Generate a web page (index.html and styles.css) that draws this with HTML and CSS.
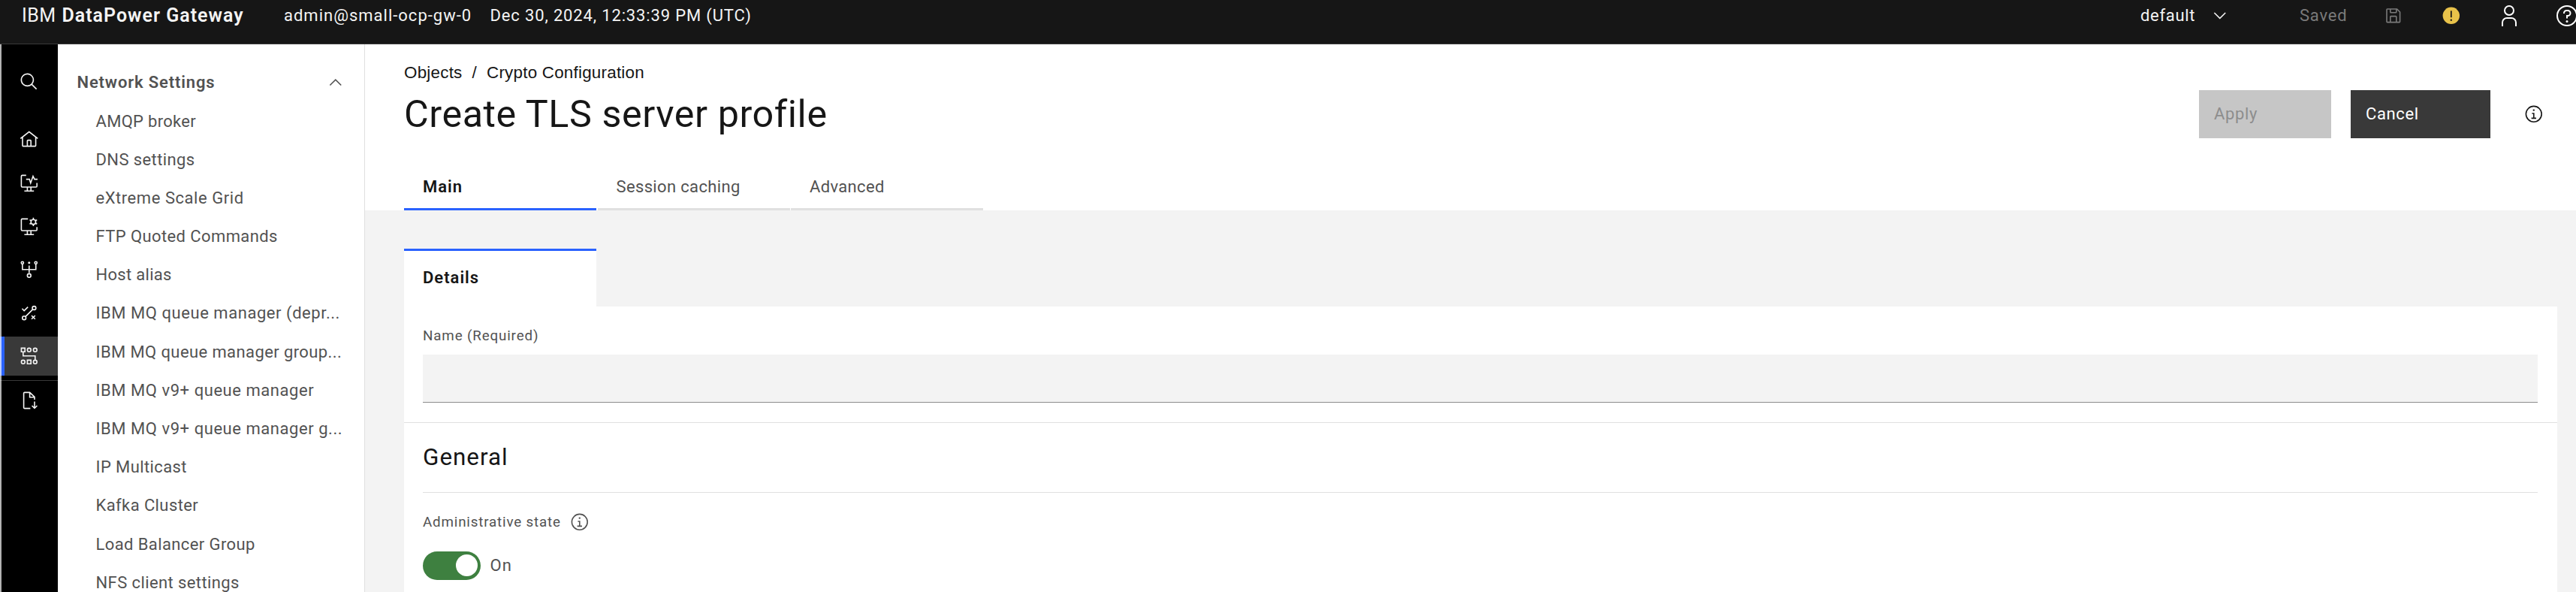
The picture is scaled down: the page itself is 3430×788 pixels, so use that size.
FILE: index.html
```html
<!DOCTYPE html>
<html lang="en">
<head>
<meta charset="utf-8">
<title>IBM DataPower Gateway</title>
<link rel="stylesheet" href="styles.css">
</head>
<body>
<header class="header">
  <div class="brand"><span class="brand-light">IBM</span><span class="brand-name">DataPower Gateway</span></div>
  <span class="host">admin@small-ocp-gw-0</span>
  <span class="clock">Dec 30, 2024, 12:33:39 PM (UTC)</span>
  <div class="header-tools">
    <span class="domain">default</span>
    <svg class="icon domain-chevron" viewBox="0 0 16 16"><path d="M8 11L3 6l.7-.7L8 9.6l4.3-4.3.7.7z"/></svg>
    <span class="saved">Saved</span>
    <svg class="icon save-icon" viewBox="0 0 32 32"><path d="M27.71,9.29l-5-5A1,1,0,0,0,22,4H6A2,2,0,0,0,4,6V26a2,2,0,0,0,2,2H26a2,2,0,0,0,2-2V10A1,1,0,0,0,27.71,9.29ZM12,6h8v4H12Zm8,20H12V18h8Zm2,0V18a2,2,0,0,0-2-2H12a2,2,0,0,0-2,2v8H6V6h4v4a2,2,0,0,0,2,2h8a2,2,0,0,0,2-2V6.41l4,4V26Z"/></svg>
    <svg class="icon warn-icon" viewBox="0 0 32 32"><circle cx="16" cy="16" r="14"/><path class="warn-mark" d="M14.9 8h2.2v11h-2.2z"/><circle class="warn-mark" cx="16" cy="23.3" r="1.5"/></svg>
    <svg class="icon-large user-icon" viewBox="0 0 32 32"><path d="M16 4a5 5 0 1 1-5 5 5 5 0 0 1 5-5m0-2a7 7 0 1 0 7 7 7 7 0 0 0-7-7zM26 30h-2v-5a5 5 0 0 0-5-5h-6a5 5 0 0 0-5 5v5H6v-5a7 7 0 0 1 7-7h6a7 7 0 0 1 7 7z"/></svg>
    <svg class="icon-large help-icon" viewBox="0 0 32 32"><circle class="line" cx="16" cy="16" r="13"/><circle cx="16" cy="23.5" r="1.5"/><path d="M17 8h-1.500a4.490 4.490 0 0 0-4.500 4.500v.5h2v-.5a2.500 2.500 0 0 1 2.500-2.500H17a2.500 2.500 0 0 1 0 5h-2v4.500h2V17a4.500 4.500 0 0 0 0-9z"/></svg>
  </div>
</header>
<div class="shell">
  <nav class="rail">
    <div class="rail-item rail-search"><svg class="icon" viewBox="0 0 32 32"><path d="M29,27.5859l-7.5521-7.5521a11.0177,11.0177,0,1,0-1.4141,1.4141L27.5859,29ZM4,13a9,9,0,1,1,9,9A9.01,9.01,0,0,1,4,13Z"/></svg></div>
    <div class="rail-item"><svg class="icon" viewBox="0 0 32 32"><path d="M16.6123,2.2138a1.01,1.01,0,0,0-1.2427,0L1,13.4194l1.2427,1.5717L4,13.6209V26a2.0041,2.0041,0,0,0,2,2H26a2.0037,2.0037,0,0,0,2-2V13.63L29.7573,15,31,13.4282ZM18,26H14V18h4Zm2,0V18a2.0023,2.0023,0,0,0-2-2H14a2.002,2.002,0,0,0-2,2v8H6V12.0615l10-7.79,10,7.8005V26Z"/></svg></div>
    <div class="rail-item"><svg class="icon line" viewBox="0 0 32 32"><path d="M11 3H4.500Q3 3 3 4.500v16.500q0 1.500 1.500 1.500h23q1.500 0 1.500-1.500V15.500M13 23v6M19 23v6M8 29h16M11 9.500h5.500L18.500 16 22.500 4.500 25 9.500h5"/></svg></div>
    <div class="rail-item"><svg class="icon line" viewBox="0 0 32 32"><path d="M14 3H4.500Q3 3 3 4.500v16.500q0 1.500 1.500 1.500h23q1.500 0 1.500-1.500V16.500M13 23v6M19 23v6M8 29h16"/><circle cx="23" cy="8" r="4"/><path d="M23 1v3M23 12v3M16.900 4.500l2.600 1.500M26.500 10l2.600 1.500M16.900 11.500l2.600-1.500M26.500 6l2.600-1.500"/></svg></div>
    <div class="rail-item"><svg class="icon line" viewBox="0 0 32 32"><circle cx="4.800" cy="4.800" r="2"/><circle cx="27.200" cy="4.800" r="2"/><circle class="dot" cx="16" cy="4.800" r="1.900"/><path d="M4.800 7v9h22.400V7M16 9.500V22"/><circle cx="16" cy="26" r="3"/></svg></div>
    <div class="rail-item"><svg class="icon line" viewBox="0 0 32 32"><circle cx="24.300" cy="7.500" r="3"/><circle cx="7.700" cy="24" r="3"/><path d="M22 9.800L10 21.700M4.300 8.500l3.400 3.400L14 5.800M20 20l6 6M26 20l-6 6"/></svg></div>
    <div class="rail-item rail-selected"><svg class="icon line" viewBox="0 0 32 32"><path d="M3 3h6v6H3zM13 23h6v6h-6zM6 9v7h20v7"/><circle cx="16" cy="6" r="3"/><circle cx="26" cy="6" r="3"/><circle cx="6" cy="26" r="3"/><circle cx="26" cy="26" r="3"/></svg></div>
    <div class="rail-divider"></div>
    <div class="rail-item"><svg class="icon line" viewBox="0 0 32 32"><path d="M18 29.500H8.500q-1.500 0-1.500-1.500V4.500Q7 3 8.500 3H17l8 7.500V15M17 3v8h8M25 18v11M20.700 25l4.300 4.300 4.300-4.300"/></svg></div>
  </nav>
  <aside class="sidebar">
    <div class="side-heading"><span>Network Settings</span><svg class="icon" viewBox="0 0 16 16"><path d="M8 5l5 5-.7.7L8 6.400l-4.300 4.300L3 10z"/></svg></div>
    <ul class="side-list">
      <li class="snug">AMQP broker</li>
      <li>DNS settings</li>
      <li class="loose">eXtreme Scale Grid</li>
      <li>FTP Quoted Commands</li>
      <li class="snug">Host alias</li>
      <li class="loose">IBM MQ queue manager (depr...</li>
      <li>IBM MQ queue manager group...</li>
      <li class="loose">IBM MQ v9+ queue manager</li>
      <li class="loose">IBM MQ v9+ queue manager g...</li>
      <li>IP Multicast</li>
      <li>Kafka Cluster</li>
      <li>Load Balancer Group</li>
      <li>NFS client settings</li>
    </ul>
  </aside>
  <main class="main">
    <section class="page-head">
      <div class="crumbs"><span>Objects</span><span>/</span><span>Crypto Configuration</span></div>
      <div class="title-row">
        <h1>Create TLS server profile</h1>
        <div class="actions">
          <button class="btn btn-disabled">Apply</button>
          <button class="btn btn-cancel">Cancel</button>
          <svg class="icon" viewBox="0 0 32 32"><circle class="line" cx="16" cy="16" r="13"/><path d="M17 22v-8h-4v2h2v6h-3v2h8v-2z"/><circle cx="16" cy="9.500" r="1.500"/></svg>
        </div>
      </div>
      <div class="tabs">
        <div class="tab tab-active">Main</div>
        <div class="tab">Session caching</div>
        <div class="tab">Advanced</div>
      </div>
    </section>
    <section class="content">
      <div class="subtab">Details</div>
      <div class="panel">
        <div class="name-block">
          <label class="label" for="name">Name (Required)</label>
          <input class="field" id="name" type="text">
        </div>
        <div class="general">
          <h2>General</h2>
          <div class="label state-label"><span>Administrative state</span><svg class="icon" viewBox="0 0 32 32"><circle class="line" cx="16" cy="16" r="13"/><path d="M17 22v-8h-4v2h2v6h-3v2h8v-2z"/><circle cx="16" cy="9.500" r="1.500"/></svg></div>
          <div class="toggle-row"><span class="toggle"><span class="knob"></span></span><span>On</span></div>
        </div>
      </div>
    </section>
  </main>
</div>
<div class="window-edge"></div>
</body>
</html>
```
FILE: styles.css
```css
* { box-sizing: border-box; }
html, body { margin: 0; height: 788px; overflow: hidden; }
body {
  position: relative;
  background: #fff;
  color: #161616;
  font: 22px/26px Roboto, "Noto Sans", sans-serif;
  letter-spacing: .4px;
  white-space: nowrap;
}
.icon { width: 25.6px; height: 25.6px; flex: none; fill: currentColor; display: block; }
.icon-large { width: 32px; height: 32px; flex: none; fill: currentColor; display: block; }
.line { fill: none; stroke: currentColor; stroke-width: 2; }
.dot { fill: currentColor; stroke: none; }

/* Header */
.header {
  display: flex;
  align-items: center;
  height: 59px;
  padding: 0 0 17px 29px;
  background: #161616;
  border-bottom: 1px solid #393939;
  color: #f4f4f4;
}
.brand { display: flex; width: 349px; font-size: 25px; line-height: 30px; }
.brand-light { width: 53.500px; font-weight: 400; letter-spacing: .4px; }
.brand-name { font-weight: 600; letter-spacing: 1px; }
.host { width: 274.500px; letter-spacing: 1px; }
.clock { letter-spacing: .85px; }
.header-tools { display: flex; align-items: center; width: 580px; margin-left: auto; flex: none; }
.header-tools > * { flex-shrink: 0; }
.domain { width: 93px; letter-spacing: .7px; }
.domain-chevron { margin-right: 93.400px; }
.saved { width: 112.200px; color: #7a7a7a; letter-spacing: .8px; }
.save-icon { color: #7a7a7a; margin-right: 51px; }
.warn-icon { color: #e8c24a; margin-right: 48.500px; }
.warn-mark { fill: #161616; }
.user-icon { color: #fff; margin-right: 44.700px; }
.help-icon { color: #fff; }

/* Shell */
.shell { display: flex; height: 729px; }
.rail { width: 77px; flex: none; background: #000; color: #f4f4f4; padding-top: 24.500px; }
.rail-item { display: flex; align-items: center; justify-content: center; height: 51.200px; margin-bottom: 6.400px; padding-left: 1px; }
.rail-search { margin-bottom: 25.900px; }
.rail-selected { background: #393939; border-left: 6px solid #2a62fe; padding-left: 0; padding-right: 5px; }
.rail-divider { height: 1px; margin-bottom: .5px; background: #393939; }
.sidebar { width: 409px; flex: none; border-right: 1px solid #e0e0e0; padding-top: 25.500px; color: #525252; }
.side-heading {
  display: flex;
  align-items: center;
  justify-content: space-between;
  height: 51px;
  padding: 0 25px 0 25.500px;
  font-weight: 600;
  letter-spacing: .85px;
}
.side-list { list-style: none; margin: 0; padding: 0 0 0 50.500px; }
.side-list li { height: 51.200px; line-height: 51.200px; }
.side-list .snug { letter-spacing: .3px; }
.side-list .loose { letter-spacing: .55px; }

/* Page head */
.main { flex: 1; min-width: 0; background: #f3f3f3; }
.page-head { height: 221px; padding: 25px 0 0 52px; background: #fff; }
.crumbs { display: flex; gap: 13px; font: 22.400px/26px "Liberation Sans", Arial, sans-serif; letter-spacing: .23px; }
.title-row { display: flex; align-items: center; height: 84px; }
h1 { margin: 0; font-size: 50.300px; line-height: 60px; font-weight: 400; letter-spacing: .55px; }
.actions { display: flex; align-items: center; margin-left: auto; padding-right: 43.500px; }
.btn {
  width: 176px;
  height: 64px;
  margin: 0 26px 0 0;
  padding: 0 0 0 20px;
  border: 0;
  text-align: left;
  font: inherit;
  letter-spacing: .65px;
}
.btn-disabled { background: #c6c6c6; color: #8d8d8d; }
.btn-cancel { width: 186px; margin-right: 45px; background: #393939; color: #fff; }
.tabs { display: flex; gap: 1.500px; padding-top: 22px; }
.tab { width: 256px; height: 64px; padding: 20px 0 0 25px; border-bottom: 3px solid #e0e0e0; color: #525252; letter-spacing: .35px; }
.tab-active { border-color: #2a62fe; color: #161616; font-weight: 600; letter-spacing: 1px; }

/* Content */
.content { padding: 51px 25px 0 52px; }
.subtab {
  width: 256px;
  height: 77px;
  padding: 23px 0 0 25px;
  border-top: 3px solid #2a62fe;
  background: #fff;
  font-weight: 600;
  letter-spacing: 1px;
}
.panel { height: 400px; background: #fff; }
.name-block { height: 155px; padding: 27px 26px 0 25px; border-bottom: 1px solid #e0e0e0; }
.label { display: block; font-size: 18.800px; line-height: 24px; letter-spacing: .85px; color: #525252; }
.field { display: block; width: 100%; height: 64px; margin-top: 13px; border: 0; border-bottom: 1px solid #8d8d8d; border-radius: 0; background: #f3f3f3; }
.general { padding: 0 26px 0 25px; }
h2 { margin: 0; height: 93px; padding-top: 26px; border-bottom: 1px solid #e0e0e0; font-size: 31.400px; line-height: 40px; font-weight: 400; letter-spacing: 1px; }
.state-label { display: flex; align-items: center; gap: 12px; height: 26px; margin-top: 26px; letter-spacing: .82px; }
.toggle-row { display: flex; align-items: center; gap: 12.500px; margin-top: 25px; height: 39px; color: #525252; letter-spacing: 1px; }
.toggle { width: 77px; height: 38px; border-radius: 19px; background: #3e8040; display: flex; align-items: center; justify-content: flex-end; padding-right: 4px; }
.knob { width: 29px; height: 29px; border-radius: 50%; background: #fff; }

/* Translucent strip along the left window edge */
.window-edge { position: absolute; left: 0; top: 59px; width: 2px; height: 729px; background: rgba(255, 255, 255, .7); }
```
